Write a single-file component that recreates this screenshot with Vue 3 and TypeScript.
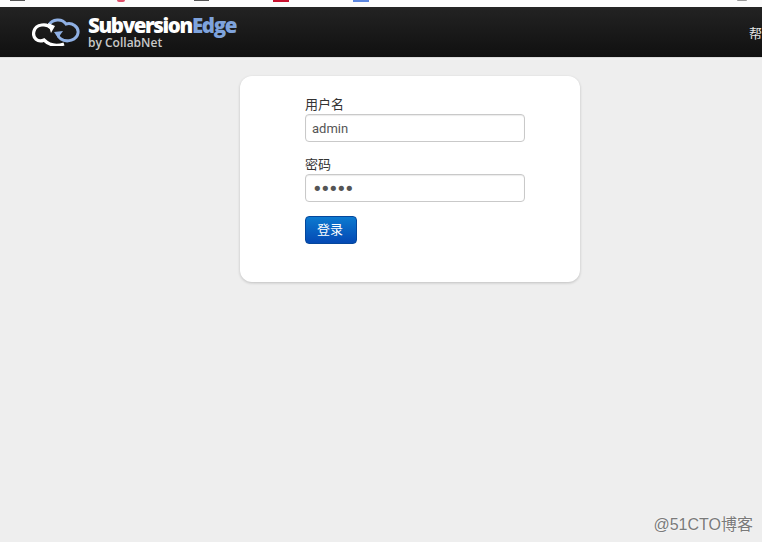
<template>
  <div class="page">
    <div class="browser-strip">
      <span class="tab-mark dark first"></span>
      <span class="tab-mark pink"></span>
      <span class="tab-mark dark second-mark"></span>
      <span class="tab-mark red"></span>
      <span class="tab-mark blue"></span>
      <span class="tab-mark tail"></span>
    </div>
    <header class="navbar">
      <div class="brand">
        <svg class="logo" width="48" height="28" viewBox="7 5 48 28" fill="none">
          <path d="M24 12 C27 6 37 5 41 11 C47 9 54 14 53 20 C52 27 42 30 36 26 C34.5 25 33.5 24 33 22" stroke="#8fb0e4" stroke-width="3" />
          <path d="M29 19 L38 18 L33 25 Z" fill="#8fb0e4" />
          <path d="M26 15 C22 10 11 11 9 18 C7 25 13 30 19 27 C23 31 30 34 39 31" stroke="#ffffff" stroke-width="3.2" />
          <path d="M23 10 L30 13 L26 20 Z" fill="#ffffff" />
        </svg>
        <div class="wordmark">
          <div class="wordmark-top">Subversion<span class="edge">Edge</span></div>
          <div class="wordmark-sub">by CollabNet</div>
        </div>
      </div>
      <span class="help">帮助</span>
    </header>
    <main class="content">
      <form class="card" @submit.prevent>
        <label class="field-label" for="username">用户名</label>
        <input id="username" v-model="username" class="field" type="text">
        <label class="field-label second" for="password">密码</label>
        <input id="password" v-model="password" class="field secret" type="password">
        <button class="login" type="submit">登录</button>
      </form>
    </main>
    <div class="watermark">@51CTO博客</div>
  </div>
</template>

<script setup lang="ts">
import { ref } from 'vue';

const username = ref<string>("admin")
const password = ref<string>("admin")
</script>

<style>
html, body {
  margin: 0;
  background: #eeeeee;
}
</style>

<style scoped>
.page {
  position: relative;
  height: 542px;
  overflow: hidden;
  background: #eeeeee;
  font-family: "Liberation Sans", "Noto Sans CJK SC", sans-serif;
}

.browser-strip {
  position: relative;
  height: 7px;
  background: #fbfbfb;
}

.tab-mark {
  position: absolute;
  top: 0;
  height: 1px;
}

.dark { background: #555555; }
.first { left: 10px; width: 15px; }
.second-mark { left: 194px; width: 15px; }
.pink { left: 117px; width: 8px; height: 2px; border-radius: 0 0 4px 4px; background: #e0506a; }
.red { left: 273px; width: 16px; height: 2px; background: #c8102e; }
.blue { left: 353px; width: 16px; height: 2px; background: #5b86e0; }
.tail { left: 737px; width: 10px; background: #999999; border-radius: 0 0 4px 4px; }

.navbar {
  display: flex;
  align-items: center;
  justify-content: space-between;
  height: 50px;
  padding-left: 32px;
  background: linear-gradient(#232323, #101010);
  border-bottom: 1px solid #dcdcdc;
  overflow: hidden;
}

.brand {
  display: flex;
  align-items: center;
  gap: 8px;
}

.wordmark {
  color: #ffffff;
  font-family: "Open Sans", sans-serif;
  font-weight: 800;
}

.wordmark-top {
  font-size: 20.5px;
  line-height: 21px;
  letter-spacing: -1.37px;
}

.edge {
  color: #7ea3dc;
}

.wordmark-sub {
  margin-top: 1px;
  font-size: 12px;
  line-height: 12px;
  font-weight: 600;
  color: #c9c9c9;
}

.help {
  flex: none;
  width: 13px;
  overflow: hidden;
  white-space: nowrap;
  font-size: 13px;
  color: #e6e6e6;
}

.content {
  padding: 18px 0 0 240px;
}

.card {
  box-sizing: border-box;
  display: flex;
  flex-direction: column;
  align-items: flex-start;
  width: 340px;
  height: 206px;
  padding: 20px 55px 0 65px;
  background: #ffffff;
  border-radius: 12px;
  box-shadow: 0 1px 3px rgba(0, 0, 0, 0.2);
}

.field-label {
  font-size: 13px;
  line-height: 18px;
  color: #333333;
}

.second {
  margin-top: 14px;
}

.field {
  box-sizing: border-box;
  width: 220px;
  height: 28px;
  padding: 0 6px;
  border: 1px solid #c9c9c9;
  border-radius: 4px;
  box-shadow: inset 0 1px 1px rgba(0, 0, 0, 0.08);
  font-family: Roboto, sans-serif;
  font-size: 13px;
  color: #555555;
  outline: none;
}

.secret {
  font-family: "DejaVu Sans", sans-serif;
  font-size: 18px;
  letter-spacing: -2.6px;
}

.login {
  width: 52px;
  height: 28px;
  margin-top: 14px;
  padding: 0 2px 3px 0;
  border: 1px solid #04479c;
  border-radius: 4px;
  background: linear-gradient(#0c7ad0, #0449b4);
  color: #ffffff;
  font-family: inherit;
  font-size: 13px;
}

.watermark {
  position: absolute;
  right: 9px;
  bottom: 8px;
  font-size: 16px;
  line-height: 18px;
  color: #7a7a7a;
  text-shadow: 0 0 2px #ffffff;
}
</style>
